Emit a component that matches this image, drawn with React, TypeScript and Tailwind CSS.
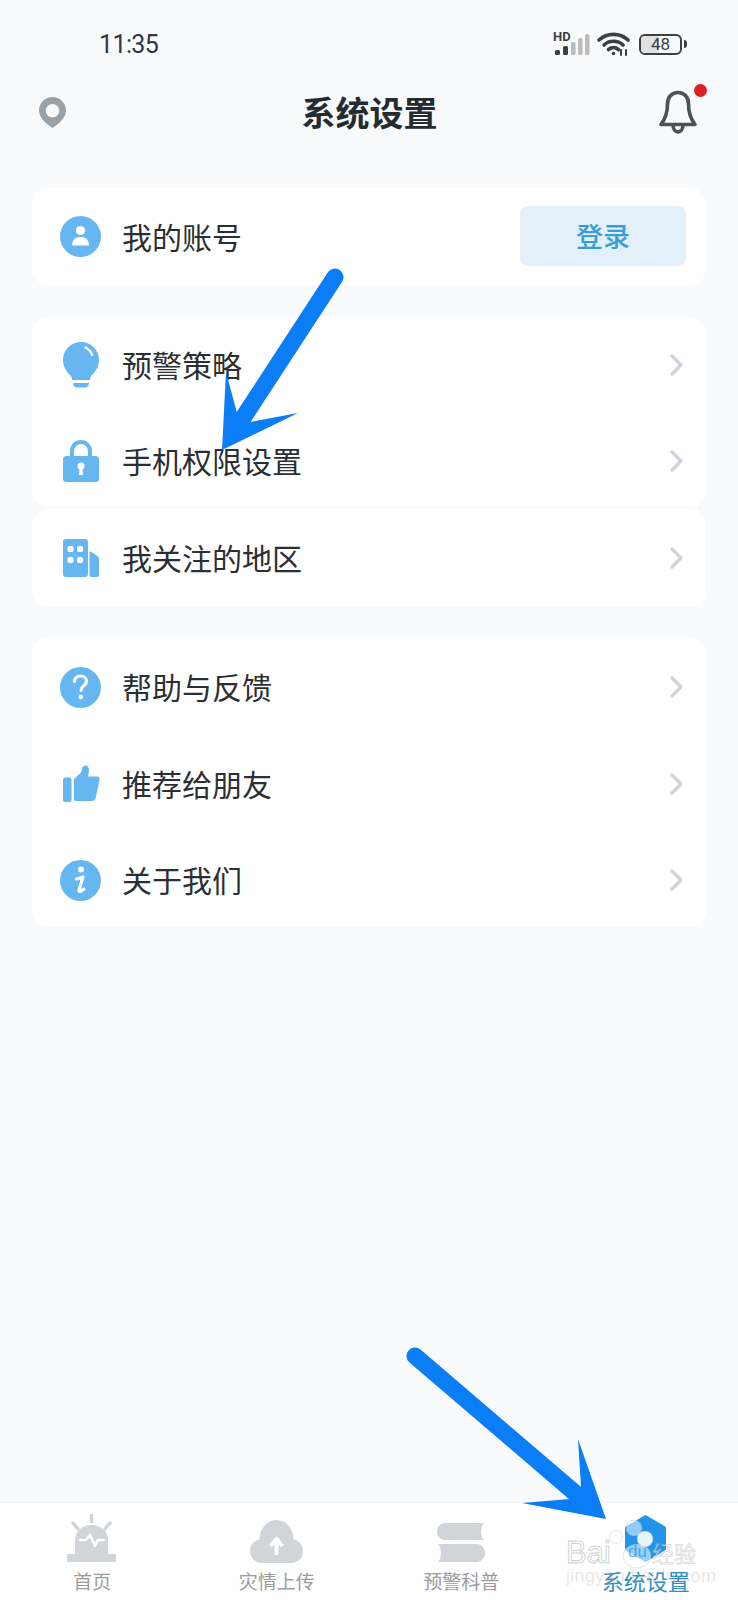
import type { ReactNode } from 'react';

const cjk = "font-['Noto_Sans_CJK_SC','Noto_Sans',sans-serif]";

function Chevron() {
  return (
    <svg className="w-[15px] h-[22px] shrink-0" viewBox="0 0 15 22" fill="none" stroke="#d0d3da" strokeWidth="3.2" strokeLinecap="round" strokeLinejoin="round">
      <path d="M3 2l9 9-9 9" />
    </svg>
  );
}

function PersonIcon() {
  return (
    <svg className="w-[41px] h-[41px]" viewBox="0 0 41 41">
      <circle cx="20.5" cy="20.5" r="20.5" fill="#66b6f1" />
      <circle cx="20.5" cy="14.5" r="4.6" fill="#fff" />
      <path d="M12 29.5c0-6 3.5-8.5 8.5-8.500s8.500 2.500 8.500 8.500z" fill="#fff" />
    </svg>
  );
}

function BulbIcon() {
  return (
    <svg className="w-[38px] h-[48px]" viewBox="0 0 38 48">
      <path d="M19 1C9 1 1 9 1 19c0 7 3.500 11.500 7 15 1.500 1.500 2 3 2 5h18c0-2 .5-3.500 2-5 3.500-3.500 7-8 7-15C37 9 29 1 19 1z" fill="#66b6f1" />
      <path d="M23.500 6.500c3 1.500 5.500 4 6.500 7.500" fill="none" stroke="#fff" strokeWidth="2.400" strokeLinecap="round" />
      <path d="M11 42h16c0 3-2 4.500-4 4.500h-8c-2 0-4-1.500-4-4.500z" fill="#66b6f1" />
    </svg>
  );
}

function LockIcon() {
  return (
    <svg className="w-[38px] h-[44px]" viewBox="0 0 38 44">
      <path d="M10 18v-6a9 9 0 0 1 18 0v6" fill="none" stroke="#66b6f1" strokeWidth="4" />
      <rect x="1" y="17" width="36" height="26" rx="3.500" fill="#66b6f1" />
      <circle cx="19" cy="27" r="3.600" fill="#fff" />
      <path d="M17.600 28h2.800l.6 8h-4z" fill="#fff" />
    </svg>
  );
}

function BuildingIcon() {
  return (
    <svg className="w-[38px] h-[40px]" viewBox="0 0 38 40">
      <rect x="1" y="1" width="25" height="38" rx="3" fill="#66b6f1" />
      <path d="M27.500 14.500c0-1 .9-1.400 1.600-.9l6.900 5c.6.500 1 1.200 1 2V37c0 1.100-.9 2-2 2h-5.500c-1.100 0-2-.9-2-2z" fill="#66b6f1" />
      <rect x="5.500" y="8" width="6" height="6" rx="1.800" fill="#fff" />
      <rect x="15" y="8" width="6" height="6" rx="1.800" fill="#fff" />
      <rect x="5.500" y="19" width="6" height="6" rx="1.800" fill="#fff" />
      <rect x="15" y="19" width="6" height="6" rx="1.800" fill="#fff" />
    </svg>
  );
}

function HelpIcon() {
  return (
    <svg className="w-[41px] h-[41px]" viewBox="0 0 41 41">
      <circle cx="20.500" cy="20.500" r="20.500" fill="#66b6f1" />
      <path d="M14.500 14.500c0-3.500 2.700-5.500 6-5.500s6 2 6 5c0 2.500-1.500 3.800-3 5-1.500 1.100-2.500 2-2.500 4.500" fill="none" stroke="#fff" strokeWidth="3.200" strokeLinecap="round" />
      <circle cx="20.800" cy="30" r="2.300" fill="#fff" />
    </svg>
  );
}

function ThumbIcon() {
  return (
    <svg className="w-[38px] h-[38px]" viewBox="0 0 38 38">
      <rect x="1" y="12.500" width="8.500" height="24.500" rx="2" fill="#66b6f1" />
      <path d="M12 14l6-5.500c1-1 1.800-2.500 2-4.500.2-2 1.500-3.500 3.500-3.500s3.500 1.800 3.500 4.500c0 2.500-.6 4.600-1.200 6.500H35c2 0 3 1.500 2.600 3.300l-4 18.200c-.4 1.800-1.700 3-3.600 3H14c-1.200 0-2-.8-2-2z" fill="#66b6f1" />
    </svg>
  );
}

function InfoIcon() {
  return (
    <svg className="w-[41px] h-[41px]" viewBox="0 0 41 41">
      <circle cx="20.500" cy="20.500" r="20.500" fill="#66b6f1" />
      <circle cx="21" cy="9.500" r="3" fill="#fff" />
      <path d="M16.500 19l6.500-2-4 13c-.3 1.300.8 1.700 1.800 1.100l3.200-2" fill="none" stroke="#fff" strokeWidth="3.200" strokeLinecap="round" strokeLinejoin="round" />
    </svg>
  );
}

function Row({ icon, label, right, className }: { icon: ReactNode; label: string; right: ReactNode; className: string }) {
  return (
    <div className={`flex items-center pl-[28px] pr-[22px] ${className}`}>
      <div className="w-[41px] flex items-center justify-center">{icon}</div>
      <span className={`ml-[21px] flex-1 pb-[2px] text-[30px] leading-none text-[#2b2f33] ${cjk}`}>{label}</span>
      {right}
    </div>
  );
}

function StatusBar() {
  return (
    <div className="h-[88px] pl-[99px] pr-[51px] flex items-center justify-between">
      <span className="mt-[2px] font-['Roboto',sans-serif] text-[25px] tracking-[-0.6px] text-[#33373b]">11:35</span>
      <div className="flex items-center">
        {/* signal bars with the HD tag above */}
        <div className="relative w-[37px] h-[23px]">
          <span className="absolute left-0 top-[-3px] font-['Roboto',sans-serif] font-bold text-[13px] leading-[14px] text-[#3c4044]">HD</span>
          <svg className="absolute inset-0 w-[37px] h-[23px]" viewBox="0 0 37 23">
            <rect x="2" y="17" width="5" height="5" rx="1.500" fill="#3c4044" />
            <rect x="10" y="13" width="5" height="9" rx="1.500" fill="#3c4044" />
            <rect x="18" y="9" width="4.500" height="13" rx="1.500" fill="#bcbcbc" />
            <rect x="25" y="5" width="4.500" height="17" rx="1.500" fill="#bcbcbc" />
            <rect x="32" y="1" width="4.500" height="21" rx="1.500" fill="#bcbcbc" />
          </svg>
        </div>
        <svg className="ml-[7px] w-[33px] h-[24px]" viewBox="0 0 33 24" fill="none" stroke="#3c4044" strokeWidth="3.600" strokeLinecap="round">
          <path d="M2 8c8-7.500 21-7.500 29 0" />
          <path d="M7 13c5-5 14-5 19 0" />
          <path d="M11.500 17.500c3-2.500 7-2.500 10 0" />
          <circle cx="16.500" cy="21.500" r="1.800" fill="#3c4044" stroke="none" />
          <path d="M24 18v5M29 18v5" strokeWidth="2" />
        </svg>
        {/* battery with level fill and percentage */}
        <div className="ml-[9px] flex items-center">
          <div className="relative w-[43px] h-[21px] rounded-[6px] border-2 border-[#3c4044] overflow-hidden flex items-center justify-center">
            <div className="absolute left-0 top-0 bottom-0 w-[46%] bg-[#e1e1e1]" />
            <span className="relative font-['Roboto',sans-serif] text-[17px] leading-none text-[#3c4044]">48</span>
          </div>
          <div className="ml-[2px] w-[3px] h-[8px] rounded-r-sm bg-[#3c4044]" />
        </div>
      </div>
    </div>
  );
}

function TitleBar() {
  return (
    <div className="h-[48px] pl-[39px] pr-[41px] flex items-center">
      <div className="flex-1">
        <svg className="w-[27px] h-[31px]" viewBox="0 0 27 31">
          <path fillRule="evenodd" d="M13.500 0C6 0 0 6 0 13.500 0 21 8 27.500 13.500 31 19 27.500 27 21 27 13.500 27 6 21 0 13.500 0zm0 7a6.800 6.800 0 1 1 0 13.600 6.800 6.800 0 0 1 0-13.600z" fill="#98a2a8" />
        </svg>
      </div>
      <h1 className={`ml-[3px] text-[34px] leading-none font-bold text-[#252b30] ${cjk}`}>系统设置</h1>
      {/* bell with unread dot */}
      <div className="flex-1 flex justify-end">
        <div className="relative w-[38px] h-[44px]">
          <svg className="w-[38px] h-[44px]" viewBox="0 0 38 44" fill="none" stroke="#4c5156" strokeWidth="3.600" strokeLinejoin="round" strokeLinecap="round">
            <path d="M19 2.500c-6.500 0-10.500 5-10.500 11.500 0 8-1.500 14-6.500 20.500h34c-5-6.500-6.500-12.500-6.500-20.500C29.500 7.500 25.500 2.500 19 2.500z" />
            <path d="M14 35c0 4.500 2.500 7 5 7s5-2.500 5-7" />
          </svg>
          <span className="absolute top-[-6px] right-[-10px] w-[13px] h-[13px] rounded-full bg-[#dc2028]" />
        </div>
      </div>
    </div>
  );
}

const tabs = [
  {
    label: '首页',
    icon: (
      <svg className="w-[50px] h-[49px]" viewBox="0 0 50 49">
        <path d="M24.500 1.500v6M6 9l5 6M43 9l-5 6" stroke="#d1d4d8" strokeWidth="3.500" strokeLinecap="round" fill="none" />
        <path d="M8 40V27C8 17 15 11 24.500 11S41 17 41 27v13z" fill="#d1d4d8" />
        <rect x="0" y="40" width="49" height="8" rx="1" fill="#d1d4d8" />
        <path d="M13 26h6l4-5 5 11 3-6h6" fill="none" stroke="#fff" strokeWidth="2.600" strokeLinejoin="round" strokeLinecap="round" />
      </svg>
    ),
  },
  {
    label: '灾情上传',
    icon: (
      <svg className="w-[53px] h-[49px]" viewBox="0 0 53 49">
        <path d="M12 49C5 49 0 43.500 0 37c0-6 4-10.500 9.500-11.500C10 14 17 6 26.500 6S43 14 43.500 25.500C49 26.500 53 31 53 37c0 6.500-5 12-12 12z" fill="#d1d4d8" />
        <path d="M26.500 41V28M20.500 32l6-7 6 7" fill="none" stroke="#fff" strokeWidth="4" strokeLinejoin="round" />
      </svg>
    ),
  },
  {
    label: '预警科普',
    icon: (
      <svg className="w-[50px] h-[49px]" viewBox="0 0 50 49">
        <path d="M9 9h39c-4 4-4 13 0 17H9c-4.500 0-8-4-8-8.500S4.500 9 9 9z" fill="#d1d4d8" />
        <path d="M41 30H2c4 4 4 14 0 18h39c4.500 0 8-4.500 8-9s-3.500-9-8-9z" fill="#d1d4d8" />
      </svg>
    ),
  },
];

function TabBar() {
  return (
    <div className="h-[98px] bg-white border-t border-[#f1f3f5] grid grid-cols-4">
      {tabs.map((tab) => (
        <div key={tab.label} className="flex flex-col items-center pt-[10px]">
          <div className="h-[50px] flex items-end justify-center">{tab.icon}</div>
          <span className={`mt-[5px] text-[19px] leading-[26px] text-[#9a9c9e] ${cjk}`}>{tab.label}</span>
        </div>
      ))}
      <div className="flex flex-col items-center pt-[10px]">
        <div className="h-[50px] flex items-end justify-center">
          <svg className="w-[43px] h-[49px]" viewBox="0 0 43 49">
            <path d="M21.500 1l19 11c1 .6 1.500 1.500 1.500 2.500v20c0 1-.5 2-1.500 2.500l-19 11-19-11C1.500 36.500 1 35.500 1 34.500v-20c0-1 .5-2 1.500-2.500z" fill="#2095ea" />
          </svg>
        </div>
        <span className={`mt-[3px] text-[22px] leading-[28px] text-[#2f8fc4] ${cjk}`}>系统设置</span>
      </div>
    </div>
  );
}

export default function App() {
  return (
    <div className="relative w-[738px] h-[1600px] bg-[#f8fafc] flex flex-col overflow-hidden">
      <StatusBar />
      <TitleBar />

      <main className="flex-1 px-[32px] pt-[52px] flex flex-col">
        <div className="h-[97px] rounded-[16px] bg-white">
          <Row
            className="h-[97px]"
            icon={<PersonIcon />}
            label="我的账号"
            right={
              <button className={`mr-[-2px] mt-[-1px] w-[166px] h-[60px] rounded-[8px] bg-[#e3f0f9] text-[27px] font-medium text-[#399ed8] ${cjk}`}>
                登录
              </button>
            }
          />
        </div>

        <div className="mt-[32px] h-[190px] rounded-[16px] bg-white">
          <Row className="h-[96px]" icon={<BulbIcon />} label="预警策略" right={<Chevron />} />
          <Row className="h-[96px]" icon={<LockIcon />} label="手机权限设置" right={<Chevron />} />
        </div>

        <div className="mt-[1px] h-[99px] rounded-[16px] bg-white shadow-[0_-1px_2px_rgba(0,0,0,0.02)]">
          <Row className="h-[99px]" icon={<BuildingIcon />} label="我关注的地区" right={<Chevron />} />
        </div>

        <div className="mt-[30px] h-[290px] rounded-[16px] bg-white pt-[2px]">
          <Row className="h-[96.500px]" icon={<HelpIcon />} label="帮助与反馈" right={<Chevron />} />
          <Row className="h-[96.500px]" icon={<ThumbIcon />} label="推荐给朋友" right={<Chevron />} />
          <Row className="h-[96.500px]" icon={<InfoIcon />} label="关于我们" right={<Chevron />} />
        </div>
      </main>

      <TabBar />

      {/* hand-drawn annotation arrows over the page */}
      <svg className="absolute inset-0 w-[738px] h-[1600px] pointer-events-none" viewBox="0 0 738 1600">
        <path d="M335 277L243 418" stroke="#0a7df7" strokeWidth="17" strokeLinecap="round" fill="none" />
        <path d="M226 372L237 413 250 422 298 413 222 450z" fill="#0a7df7" />
        <path d="M415 1356L575 1493" stroke="#0a7df7" strokeWidth="17" strokeLinecap="round" fill="none" />
        <path d="M578 1439L581 1487 570 1499 522 1503 606 1519z" fill="#0a7df7" />
      </svg>

      {/* site watermark in the lower right corner */}
      <div className="absolute left-[566px] top-[1534px] w-[140px] h-[56px] pointer-events-none">
        <span className="absolute left-0 top-[2px] font-['Liberation_Sans',sans-serif] text-[31px] leading-[34px] text-white/40 [-webkit-text-stroke:1px_rgba(150,150,150,0.45)]">
          Bai
        </span>
        <svg className="absolute left-[40px] top-[-18px] w-[50px] h-[54px]" viewBox="0 0 50 54" stroke="rgba(150,150,150,0.25)">
          <circle cx="10" cy="21" r="6.500" fill="rgba(255,255,255,0.5)" />
          <circle cx="28" cy="12" r="8" fill="rgba(255,255,255,0.5)" />
          <circle cx="39" cy="23" r="8" fill="rgba(255,255,255,0.9)" />
          <ellipse cx="31" cy="40" rx="14" ry="12" fill="rgba(255,255,255,0.55)" />
        </svg>
        <span className="absolute left-[62px] top-[8px] font-['Liberation_Sans',sans-serif] text-[17px] leading-[20px] text-[#2095ea]/70">
          du
        </span>
        <span className={`absolute left-[86px] top-[3px] text-[22px] leading-[30px] text-white/50 [-webkit-text-stroke:1px_rgba(150,150,150,0.3)] ${cjk}`}>
          经验
        </span>
        <span className="absolute left-0 top-[32px] font-['Liberation_Sans',sans-serif] text-[18px] leading-[20px] tracking-[0.3px] text-[#9a9a9a]/25">
          jingyan.baidu.com
        </span>
      </div>
    </div>
  );
}
